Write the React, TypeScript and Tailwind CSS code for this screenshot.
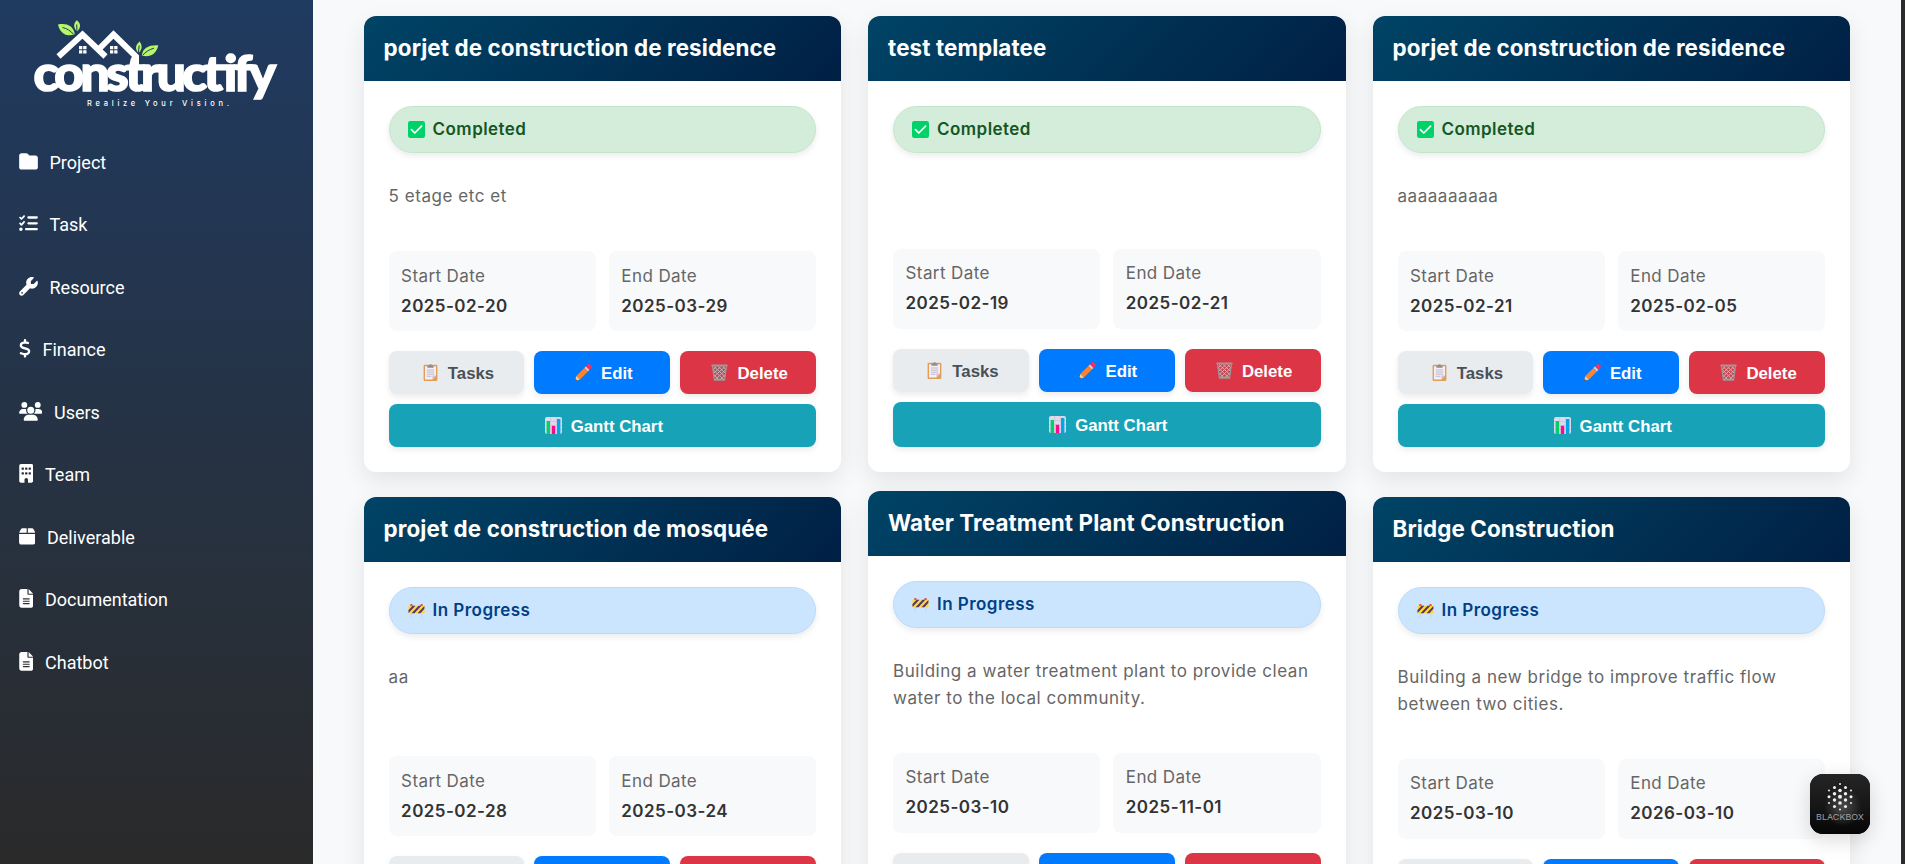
import type { ReactNode } from "react";
import type { IconType } from "react-icons";
import {
  FaBox,
  FaBuilding,
  FaDollarSign,
  FaFileLines,
  FaFolder,
  FaListCheck,
  FaUsers,
  FaWrench,
} from "react-icons/fa6";

type Status = "completed" | "progress";

interface Project {
  title: string;
  status: Status;
  description: string;
  start: string;
  end: string;
  descriptionClass: string;
  dateClass: string;
  ganttClass?: string;
}

const navItems: { label: string; icon: IconType; width: string }[] = [
  { label: "Project", icon: FaFolder, width: "w-[19px]" },
  { label: "Task", icon: FaListCheck, width: "w-[19px]" },
  { label: "Resource", icon: FaWrench, width: "w-[19px]" },
  { label: "Finance", icon: FaDollarSign, width: "w-[12px]" },
  { label: "Users", icon: FaUsers, width: "w-[23.500px]" },
  { label: "Team", icon: FaBuilding, width: "w-[14.500px]" },
  { label: "Deliverable", icon: FaBox, width: "w-[16.500px]" },
  { label: "Documentation", icon: FaFileLines, width: "w-[14.500px]" },
  { label: "Chatbot", icon: FaFileLines, width: "w-[14.500px]" },
];

const columns: { gap: string; projects: Project[] }[] = [
  {
    gap: "gap-[25px]",
    projects: [
      { title: "porjet de construction de residence", status: "completed", description: "5 etage etc et", start: "2025-02-20", end: "2025-03-29", descriptionClass: "h-[98px]", dateClass: "pt-[10px]" },
      { title: "projet de construction de mosquée", status: "progress", description: "aa", start: "2025-02-28", end: "2025-03-24", descriptionClass: "h-[122px]", dateClass: "pt-[10px]" },
    ],
  },
  {
    gap: "gap-[19px]",
    projects: [
      { title: "test templatee", status: "completed", description: "", start: "2025-02-19", end: "2025-02-21", descriptionClass: "h-[96px]", dateClass: "pt-[9px]", ganttClass: "h-[45px]" },
      { title: "Water Treatment Plant Construction", status: "progress", description: "Building a water treatment plant to provide clean water to the local community.", start: "2025-03-10", end: "2025-11-01", descriptionClass: "h-[125px]", dateClass: "pt-[9px]" },
    ],
  },
  {
    gap: "gap-[25px]",
    projects: [
      { title: "porjet de construction de residence", status: "completed", description: "aaaaaaaaaa", start: "2025-02-21", end: "2025-02-05", descriptionClass: "h-[98px]", dateClass: "pt-[10px]" },
      { title: "Bridge Construction", status: "progress", description: "Building a new bridge to improve traffic flow between two cities.", start: "2025-03-10", end: "2026-03-10", descriptionClass: "h-[125px]", dateClass: "pt-[9px]" },
    ],
  },
];

function CheckIcon() {
  return (
    <svg viewBox="0 0 17 17" className="size-[17px] shrink-0">
      <rect width="17" height="17" rx="2.2" fill="#00d26a" />
      <path d="M3.4 8.6 6.8 12 13.6 5.2" fill="none" stroke="#fff" strokeWidth="1.7" strokeLinecap="round" strokeLinejoin="round" />
    </svg>
  );
}

function BarrierIcon() {
  return (
    <svg viewBox="0 0 17 17" className="size-[17px] shrink-0">
      <path d="M3.2 10.500v5.500M13.800 10.500v5.500" stroke="#d3d3d3" strokeWidth="1" />
      <circle cx="3.400" cy="3.300" r="1.200" fill="#f8312f" />
      <circle cx="13.600" cy="3.300" r="1.200" fill="#f8312f" />
      <g transform="translate(0 .7)">
        <rect x="0.4" y="3" width="16.2" height="7.6" rx="1" fill="#fcd53f" />
        <path d="M.4 7.6 4.6 3h2.8L.6 10.4zM3.6 10.6 10.6 3h2.8l-7 7.6zM9.6 10.6 16.4 3.2v2.9l-4 4.5z" fill="#533566" />
      </g>
    </svg>
  );
}

function ClipboardIcon() {
  return (
    <svg viewBox="0 0 17 17" className="size-[17px] shrink-0">
      <rect x="1.6" y="0.8" width="13.8" height="16.2" rx="1.2" fill="#e39d54" />
      <path d="M3 2.2h11v9.4L10.4 15.6H3z" fill="#f3eef8" />
      <path d="M14 11.6h-3.6v4z" fill="#cdc4d6" />
      <path d="M4.8 6h7.4M4.8 8.1h7.4M4.8 10.2h7.4M4.8 12.3h4.6" stroke="#b4acbc" strokeWidth="0.8" />
      <path d="M5.4 3.8V1.6h1.8a1.3 1.3 0 0 1 2.6 0h1.8v2.2z" fill="#8d8d92" />
    </svg>
  );
}

function PencilIcon() {
  return (
    <svg viewBox="0 0 17 17" className="size-[17px] shrink-0">
      <path d="M10.800 2.700 13 .6c.7-.7 1.500-.6 2.200.1l1.100 1.100c.7.7.7 1.400 0 2.100l-2.200 2.200z" fill="#f92f60" />
      <path d="M9.400 4.100 10.900 2.600 14.400 6.100 12.900 7.600z" fill="#d3d3d3" />
      <path d="M1.400 12 9.400 4.100l3.500 3.500-8 8z" fill="#ff822d" />
      <path d="M1.400 12 4.900 15.600.8 16.800c-.4.1-.7-.2-.6-.6z" fill="#ffce7c" />
      <path d="M.6 14.900 2.100 16.400.8 16.800c-.4.1-.7-.2-.6-.6z" fill="#402a32" />
    </svg>
  );
}

function BinIcon() {
  return (
    <svg viewBox="0 0 17 17" className="size-[17px] shrink-0">
      <path d="M1.4 2.4h14.2L13.8 16H3.2z" fill="#b9555f" fillOpacity="0.5" />
      <path
        d="M2 5.5 12.6 15.5M2.6 10.4 7.6 15.5M3 2.6 14 12.6M7.2 2.6 14.6 9.4M11.4 2.6 15 5.8M15 5.5 4.4 15.5M14.4 10.4 9.4 15.5M14 2.6 3 12.6M9.8 2.6 2.4 9.4M5.6 2.6 2 5.8"
        stroke="#bdbdbd"
        strokeWidth="0.9"
      />
      <path d="M1.5 2.4 3.4 16M15.5 2.4 13.6 16" stroke="#9b9b9b" strokeWidth="1.1" />
      <rect x="0.3" y="0.6" width="16.4" height="2" rx="0.8" fill="#9b9b9b" />
      <rect x="2.9" y="14.6" width="11.2" height="2.2" rx="0.6" fill="#9b9b9b" />
    </svg>
  );
}

function BarsIcon() {
  return (
    <svg viewBox="0 0 17 17" className="size-[17px] shrink-0">
      <rect width="17" height="17" rx="2" fill="#e1d8ec" />
      <path d="M0 4.5h17M0 8.5h17M0 12.5h17M5.6 0v17M11.4 0v17" stroke="#cdc4d6" strokeWidth="0.8" />
      <rect x="1.6" y="4" width="3.4" height="13" fill="#00d26a" />
      <rect x="6.8" y="8.8" width="3.4" height="8.2" fill="#f70a8d" />
      <rect x="12" y="2" width="3.4" height="15" fill="#00a6ed" />
    </svg>
  );
}

function Logo() {
  return (
    <svg viewBox="0 0 313 130" className="h-[130px] w-[313px] shrink-0">
      <g fill="none" stroke="#fff" strokeWidth="6">
        <path d="M58.5 56.5 82.5 34.5 105.5 56.5" />
        <path d="M97 51 113.5 34.5 136 56.500V70" />
      </g>
      <path d="M79 46h3.3v3.3H79zM83.2 46h3.3v3.3h-3.3zM79 50.2h3.3v3.3H79zM83.2 50.2h3.3v3.3h-3.3zM110 46h3.3v3.3H110zM114.2 46h3.3v3.3h-3.3zM110 50.2h3.3v3.3H110zM114.2 50.2h3.3v3.3h-3.3z" fill="#fff" />
      <g fill="#b5f56b">
        <path d="M58 24.4c9-1.6 15.500 1.500 16.800 9.800C67 37.300 60 33.500 58 24.400z" />
        <path d="M76.800 20.300c4.200 3.300 4.300 7.200.4 11.300-4-3.700-4.100-7.700-.4-11.300z" />
        <path d="M139.600 41.400c3 4 2.600 8-1 11.600-3.800-3.800-3.400-8 1-11.600z" />
        <path d="M158.300 45.400c-9.600-.6-15.500 2.600-16.500 10 7.600 2.600 14.500-1.400 16.500-10z" />
      </g>
      <path d="M62.500 27.500c4.500 1 8.500 3.500 11 6.800M76.700 24.500l.3 8M139.200 45.500l-.9 8M154 48.200c-4.500 1.200-8.500 3.600-11.300 7" stroke="#1f3a5f" strokeWidth="1" fill="none" />
      <g transform="translate(33.500 90.500) scale(1.050 1)">
        <text
          x="0"
          y="0"
          textLength="231"
          lengthAdjust="spacing"
          fill="#fff"
          stroke="#fff"
          strokeWidth="1.600"
          className="font-['Lato',sans-serif] text-[49px] font-black"
        >
          constructify
        </text>
      </g>
      <text
        x="87"
        y="106"
        textLength="142"
        lengthAdjust="spacing"
        fill="#fff"
        className="font-['Inter',sans-serif] text-[7.500px] font-medium"
      >
        Realize Your Vision.
      </text>
    </svg>
  );
}

function Sidebar() {
  return (
    <aside className="flex w-[313px] shrink-0 flex-col bg-linear-to-b from-[#1f3a60] to-[#2a2a2a]">
      <Logo />
      <nav className="flex flex-col pt-px pl-[18.500px] text-white">
        {navItems.map(({ label, icon: Icon, width }) => (
          <a key={label} className="flex h-[62.500px] items-center gap-3 font-['Roboto',sans-serif] text-[18px]">
            <Icon className={`mb-0.5 h-[18.700px] shrink-0 ${width}`} />
            <span>{label}</span>
          </a>
        ))}
      </nav>
    </aside>
  );
}

function StatusPill({ status }: { status: Status }) {
  const done = status === "completed";
  return (
    <div
      className={`flex h-[47px] items-center gap-2 rounded-full border px-[18px] text-[17px] font-semibold tracking-[0.450px] shadow-[0_3px_6px_rgba(0,0,0,0.080)] ${
        done ? "border-[#c3e6cb] bg-[#d4edda] text-[#155724]" : "border-[#b8daff] bg-[#cce5ff] text-[#004085]"
      }`}
    >
      {done ? <CheckIcon /> : <BarrierIcon />}
      <span>{done ? "Completed" : "In Progress"}</span>
    </div>
  );
}

function DateBox({ label, value, className }: { label: string; value: string; className: string }) {
  return (
    <div className={`h-20 rounded-[8px] bg-[#f8f9fb] px-[12.500px] leading-[30px] ${className}`}>
      <div className="text-[17px] tracking-[0.400px] text-[#666]">{label}</div>
      <div className="text-[17px] font-semibold tracking-[0.450px] text-[#333]">{value}</div>
    </div>
  );
}

function ActionButton({ icon, label, className }: { icon: ReactNode; label: string; className: string }) {
  return (
    <button
      className={`flex items-center justify-center gap-[9px] rounded-[8px] pl-[3px] font-['Liberation_Sans',sans-serif] text-[16.800px] font-bold shadow-[0_3px_6px_rgba(0,0,0,0.080)] ${className}`}
    >
      {icon}
      <span className="pt-[2px]">{label}</span>
    </button>
  );
}

function ProjectCard({ project }: { project: Project }) {
  return (
    <article className="shrink-0 overflow-hidden rounded-[12px] bg-white shadow-[0_8px_25px_rgba(0,0,0,0.090)]">
      <h3 className="flex h-[65px] items-center bg-linear-[135deg] from-[#004466] to-[#002044] px-5 pb-[2px] text-[22.400px] font-bold tracking-[0.100px] text-white">
        {project.title}
      </h3>
      <div className="p-[25px]">
        <StatusPill status={project.status} />
        <p className={`pt-[30px] text-[17px] leading-[27px] tracking-[0.540px] text-[#666] ${project.descriptionClass}`}>
          {project.description}
        </p>
        <div className="grid grid-cols-2 gap-[13px]">
          <DateBox label="Start Date" value={project.start} className={project.dateClass} />
          <DateBox label="End Date" value={project.end} className={project.dateClass} />
        </div>
        <div className="mt-5 grid grid-cols-3 gap-[10px]">
          <ActionButton icon={<ClipboardIcon />} label="Tasks" className="h-[43px] bg-[#e9ecef] text-[#495057]" />
          <ActionButton icon={<PencilIcon />} label="Edit" className="h-[43px] bg-[#007bff] text-white" />
          <ActionButton icon={<BinIcon />} label="Delete" className="h-[43px] bg-[#dc3545] text-white" />
          <ActionButton
            icon={<BarsIcon />}
            label="Gantt Chart"
            className={`col-span-3 bg-[#17a2b8] text-white ${project.ganttClass ?? "h-[43px]"}`}
          />
        </div>
      </div>
    </article>
  );
}

const dots = [
  [30, 10, 1], [24.5, 13.5, 1.5], [35.5, 13.5, 1.5], [19, 16.5, 1], [30, 16.5, 1.8], [41, 16.5, 1],
  [24.5, 19.8, 1.7], [35.5, 19.8, 1.7], [19, 22.8, 1.5], [30, 22.8, 2], [41, 22.8, 1.5],
  [24.5, 26, 1.7], [35.5, 26, 1.7], [19, 29, 1], [30, 29, 1.8], [41, 29, 1],
  [24.5, 32.5, 1.5], [35.5, 32.5, 1.5], [30, 35.5, 1],
];

function BlackboxBadge() {
  return (
    <div className="absolute top-[774px] left-[1810px] size-[60px] overflow-hidden rounded-[13px] bg-black shadow-[0_6px_20px_rgba(0,0,0,0.150)]">
      <svg viewBox="0 0 60 60" className="size-full">
        <defs>
          <linearGradient id="badge-fill" x1="0" y1="0" x2="0" y2="1">
            <stop offset="0" stopColor="#262626" />
            <stop offset="0.6" stopColor="#141414" />
            <stop offset="1" stopColor="#050505" />
          </linearGradient>
          <radialGradient id="badge-glow" cx="0.55" cy="0.55" r="0.32">
            <stop offset="0" stopColor="#4c4c4c" />
            <stop offset="1" stopColor="#4c4c4c" stopOpacity="0" />
          </radialGradient>
        </defs>
        <rect width="60" height="60" fill="url(#badge-fill)" />
        <rect width="60" height="60" fill="url(#badge-glow)" />
        {dots.map(([cx, cy, r]) => (
          <circle key={`${cx}-${cy}`} cx={cx} cy={cy} r={r} fill="#f0f0f0" />
        ))}
        <text x="6" y="46" textLength="48" lengthAdjust="spacingAndGlyphs" fill="#a0a0a0" className="font-['Inter',sans-serif] text-[8px]">
          BLACKBOX
        </text>
      </svg>
    </div>
  );
}

export default function App() {
  return (
    <div className="relative flex h-[864px] w-[1905px] overflow-hidden bg-[#f8f9fb] font-['Inter',sans-serif]">
      <Sidebar />
      <main className="grid flex-1 grid-cols-3 gap-[27px] overflow-hidden pt-4 pr-[51px] pl-[50.600px]">
        {columns.map((column, index) => (
          <div key={index} className={`flex min-w-0 flex-col ${column.gap}`}>
            {column.projects.map((project) => (
              <ProjectCard key={project.title} project={project} />
            ))}
          </div>
        ))}
      </main>
      <div className="w-1 shrink-0 bg-[#2b2b2b]" />
      <BlackboxBadge />
    </div>
  );
}
